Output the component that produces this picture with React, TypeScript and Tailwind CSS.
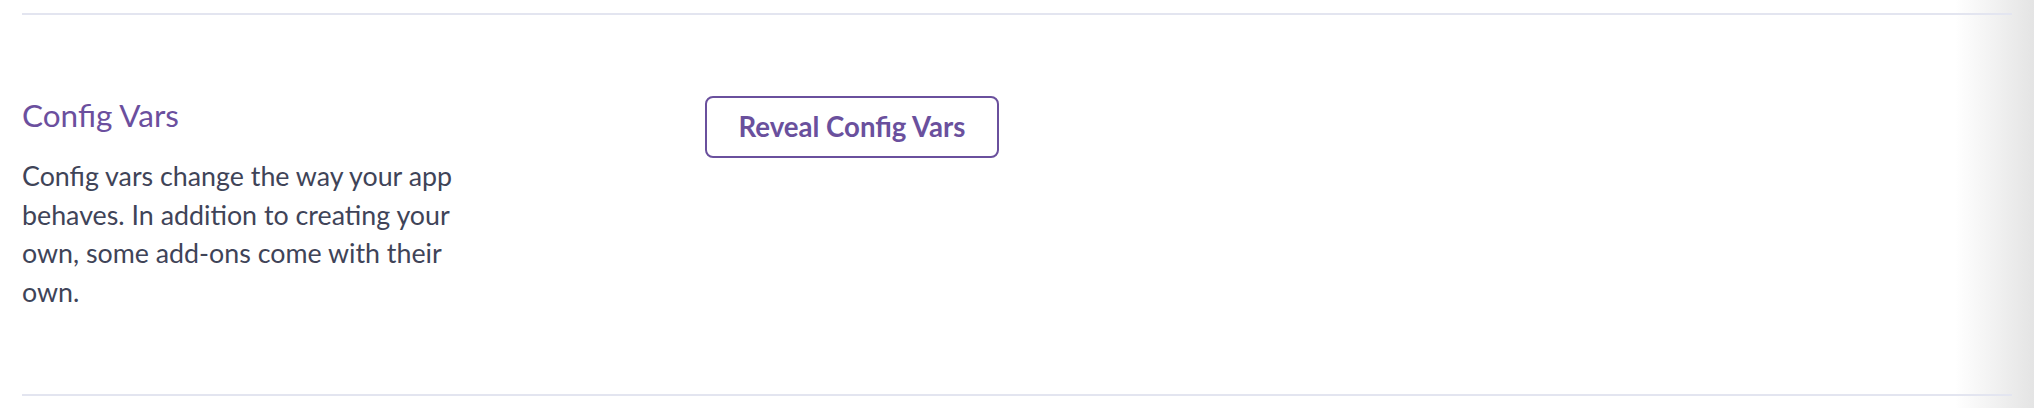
export default function App() {
  return (
    <div className="relative h-[408px] w-full overflow-hidden bg-[linear-gradient(to_right,#ffffff_1955px,#e4e4e4_2034px)] font-['Lato','Noto_Sans',sans-serif]">
      <div className="px-[22px] pt-[13px]">
        <div className="flex h-[383px] border-y-2 border-[#e3e5f0]">
          <div className="w-[683px] shrink-0 pt-[82px]">
            <h2 className="text-[31.5px] font-normal leading-[36px] text-[#6b4f9e]">Config Vars</h2>
            <p className="mt-[24px] max-w-[470px] text-[26.8px] leading-[38.5px] text-[#3f4458]">
              Config vars change the way your app behaves. In addition to creating your own, some add-ons come with their own.
            </p>
          </div>
          <div className="pt-[81px]">
            <button className="flex h-[62px] w-[294px] items-center justify-center rounded-[8px] border-2 border-[#6a509d] bg-white text-[27.6px] font-bold text-[#6a509d]">
              Reveal Config Vars
            </button>
          </div>
        </div>
      </div>
    </div>
  );
}
